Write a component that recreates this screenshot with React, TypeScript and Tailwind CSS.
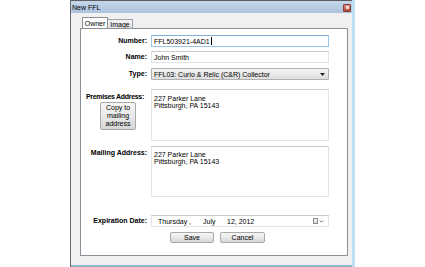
import { ChevronDown } from "lucide-react";

const font = { fontFamily: '"Liberation Sans", Arial, sans-serif' };

function Label({ text, className = "" }: { text: string; className?: string }) {
  return (
    <div className={`w-[66px] shrink-0 text-right font-bold text-[7px] leading-[12px] whitespace-nowrap ${className}`}>
      {text}
    </div>
  );
}

function TextBox({ children, className = "", focused = false }: { children?: React.ReactNode; className?: string; focused?: boolean }) {
  return (
    <div
      className={`ml-[4px] w-[178px] bg-white border px-[2px] text-[7px] leading-[7px] ${
        focused
          ? "border-[#9cc6e8] border-t-[#7fb0dc]"
          : "border-[#e0e3e8] border-t-[#c6c9d0]"
      } ${className}`}
    >
      {children}
    </div>
  );
}

function WinButton({ children, className = "" }: { children: React.ReactNode; className?: string }) {
  return (
    <div
      className={`flex items-center justify-center rounded-[2px] border border-[#a9a9a9] bg-gradient-to-b from-[#f6f6f6] via-[#e9e9e9] to-[#d6d6d6] text-[7px] leading-[7px] text-center ${className}`}
    >
      {children}
    </div>
  );
}

export default function App() {
  return (
    <div className="w-[425px] h-[267px] bg-white overflow-hidden text-black" style={font}>
      <div className="ml-[70px] w-[285px] h-[267px] flex flex-col border-l border-l-[#6a6a6a] border-r-[3px] border-r-[#bfe0f4]">
        {/* title bar */}
        <div className="h-[13px] border-t border-t-[#5c5c5c] bg-gradient-to-b from-[#c4d6ea] to-[#adc3dc] flex items-center justify-between pl-[1px] pr-[1px]">
          <span className="text-[7px] leading-[7px]">New FFL</span>
          <div className="w-[8px] h-[8px] mt-[1px] rounded-[1px] border border-[#8a3b33] bg-gradient-to-b from-[#d98a7f] to-[#b8473b] flex items-center justify-center">
            <div className="w-[3px] h-[3px] bg-[#f3d9d4]" />
          </div>
        </div>

        {/* body */}
        <div className="flex-1 flex flex-col bg-[#f0f0f0] pl-[9px] pr-[4px] pt-[5px]">
          {/* tabs */}
          <div className="flex items-end h-[10px] ml-[2px] text-[7px]">
            <div className="relative z-10 h-[11px] w-[26px] bg-white border border-[#8d9098] border-b-0 flex items-center justify-center leading-[7px]">
              Owner
            </div>
            <div className="h-[9px] w-[25px] border border-[#a0a3aa] border-l-0 border-b-0 bg-gradient-to-b from-[#f3f3f3] to-[#e2e2e2] flex items-center justify-center leading-[7px]">
              Image
            </div>
          </div>

          {/* panel */}
          <div className="h-[228px] bg-white border border-[#8d9098] flex flex-col">
            {/* Number */}
            <div className="flex items-center mt-[6px]">
              <Label text="Number:" />
              <TextBox focused className="h-[12px] flex items-center">
                <span>FFL503921-4AD1</span>
                <span className="inline-block w-[1px] h-[8px] bg-black ml-[1px]" />
              </TextBox>
            </div>

            {/* Name */}
            <div className="flex items-center mt-[4px]">
              <Label text="Name:" />
              <TextBox className="h-[12px] flex items-center">John Smith</TextBox>
            </div>

            {/* Type */}
            <div className="flex items-center mt-[5px]">
              <Label text="Type:" />
              <div className="ml-[4px] w-[178px] h-[12px] rounded-[1px] border border-[#b0b0b0] bg-gradient-to-b from-[#f4f4f4] to-[#dedede] flex items-center justify-between px-[2px] text-[7px] leading-[7px]">
                <span>FFL03: Curio &amp; Relic (C&amp;R) Collector</span>
                <svg width="5" height="3" viewBox="0 0 5 3" className="mr-[1px]">
                  <path d="M0 0H5L2.5 3Z" fill="#222" />
                </svg>
              </div>
            </div>

            {/* Premises */}
            <div className="flex items-start mt-[9px]">
              <div className="w-[66px] shrink-0 flex flex-col items-end pt-[3px]">
                <div className="font-bold text-[7px] leading-[10px] tracking-[-0.3px] whitespace-nowrap mr-[3px]">Premises Address:</div>
                <WinButton className="mt-[0px] mr-[11px] w-[36px] h-[28px] flex-col">
                  <span className="leading-[8px]">Copy to</span>
                  <span className="leading-[8px]">mailing</span>
                  <span className="leading-[8px]">address</span>
                </WinButton>
              </div>
              <TextBox className="h-[52px] pt-[5px] leading-[7px]">
                <div>227 Parker Lane</div>
                <div>Pittsburgh, PA 15143</div>
              </TextBox>
            </div>

            {/* Mailing */}
            <div className="flex items-start mt-[5px]">
              <Label text="Mailing Address:" className="leading-[10px] pt-[1px]" />
              <TextBox className="h-[51px] pt-[4px] leading-[7px]">
                <div>227 Parker Lane</div>
                <div>Pittsburgh, PA 15143</div>
              </TextBox>
            </div>

            {/* Expiration */}
            <div className="flex items-center mt-[18px]">
              <Label text="Expiration Date:" />
              <TextBox className="h-[12px] flex items-center pl-[6px] whitespace-nowrap">
                <span className="w-[45px] shrink-0">Thursday ,</span>
                <span className="w-[24px] shrink-0">July</span>
                <span className="flex-1">12, 2012</span>
                <span className="flex items-center gap-[1px] mr-[2px]">
                  <span className="inline-block w-[5px] h-[6px] border border-[#8a8a8a] bg-gradient-to-b from-[#f8f8f8] to-[#d8d8d8]" />
                  <ChevronDown size={5} strokeWidth={4} color="#444" />
                </span>
              </TextBox>
            </div>

            {/* Buttons */}
            <div className="flex mt-[5px] ml-[89px] gap-[6px]">
              <WinButton className="w-[44px] h-[11px]">Save</WinButton>
              <WinButton className="w-[45px] h-[11px]">Cancel</WinButton>
            </div>
          </div>

          <div className="flex-1" />
        </div>
        <div className="h-[1px] bg-[#7fc4e6]" />
        <div className="h-[1px] bg-[#9aa7b3]" />
      </div>
    </div>
  );
}
